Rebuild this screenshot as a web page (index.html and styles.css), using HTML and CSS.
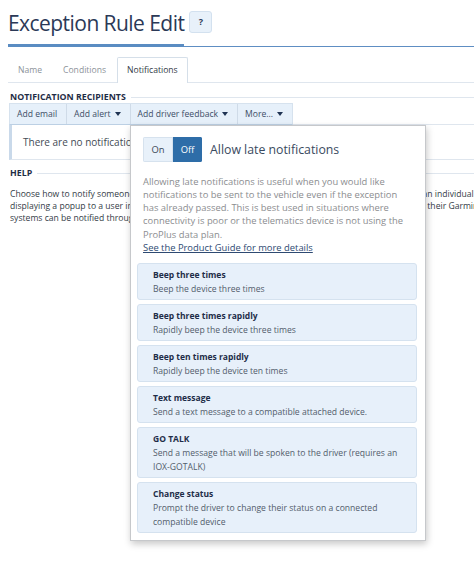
FILE: index.html
```html
<!DOCTYPE html>
<html lang="en">
<head>
<meta charset="utf-8">
<title>Exception Rule Edit</title>
<link rel="stylesheet" href="styles.css">
</head>
<body>
<div class="page">
  <header class="header">
    <h1 class="title">Exception Rule Edit</h1>
    <button class="help-btn" type="button">?</button>
  </header>

  <nav class="tabs">
    <span class="tab">Name</span>
    <span class="tab">Conditions</span>
    <span class="tab active">Notifications</span>
  </nav>

  <section class="section">
    <h2 class="section-title">NOTIFICATION RECIPIENTS</h2>
    <div class="toolbar-row">
      <div class="toolbar">
        <button class="tb-btn" type="button">Add email</button>
        <button class="tb-btn" type="button">Add alert <span class="caret"></span></button>
        <button class="tb-btn" type="button">Add driver feedback <span class="caret"></span></button>
        <button class="tb-btn" type="button">More... <span class="caret"></span></button>
      </div>
    </div>
    <div class="empty">There are no notification recipients for this rule yet.</div>
  </section>

  <section class="section help">
    <h2 class="section-title">HELP</h2>
    <p class="help-text">
      <span class="line">Choose how to notify someone when the exception rule is triggered. Notifications can be sent to either an individual by email, by</span>
      <span class="line">displaying a popup to a user in MyGeotab, or by sending driver feedback to the GO device. Drivers using their Garmin navigation</span>
      <span class="line">systems can be notified through the in-vehicle devices.</span>
    </p>
  </section>

  <div class="popup">
    <div class="late-row">
      <div class="toggle">
        <span class="seg">On</span>
        <span class="seg seg-on">Off</span>
      </div>
      <span class="late-label">Allow late notifications</span>
    </div>
    <p class="late-desc">Allowing late notifications is useful when you would like notifications to be sent to the vehicle even if the exception has already passed. This is best used in situations where connectivity is poor or the telematics device is not using the ProPlus data plan.
      <a class="guide-link" href="#">See the Product Guide for more details</a>
    </p>
    <ul class="options">
      <li class="option"><span class="opt-title">Beep three times</span><span class="opt-desc">Beep the device three times</span></li>
      <li class="option"><span class="opt-title">Beep three times rapidly</span><span class="opt-desc">Rapidly beep the device three times</span></li>
      <li class="option"><span class="opt-title">Beep ten times rapidly</span><span class="opt-desc">Rapidly beep the device ten times</span></li>
      <li class="option"><span class="opt-title">Text message</span><span class="opt-desc">Send a text message to a compatible attached device.</span></li>
      <li class="option"><span class="opt-title">GO TALK</span><span class="opt-desc">Send a message that will be spoken to the driver (requires an IOX-GOTALK)</span></li>
      <li class="option"><span class="opt-title">Change status</span><span class="opt-desc">Prompt the driver to change their status on a connected compatible device</span></li>
    </ul>
  </div>
</div>
</body>
</html>
```
FILE: styles.css
```css
* { box-sizing: border-box; }

html, body {
  margin: 0;
  background: #ffffff;
}

body {
  font-family: "Open Sans", "Noto Sans", sans-serif;
  color: #333b46;
  overflow: hidden;
}

.page {
  position: relative;
  width: 474px;
  height: 587px;
  overflow: hidden;
  padding-left: 8px;
}

/* Header */
.header {
  display: flex;
  align-items: flex-end;
  height: 47px;
  border-bottom: 1px solid #5e8ec3;
}

.title {
  margin: 0 0 -1px 0;
  padding-bottom: 7px;
  font-size: 21px;
  line-height: 28px;
  font-weight: 400;
  letter-spacing: -0.55px;
  color: #2b3957;
  border-bottom: 3px solid #5a8cc2;
}

.help-btn {
  margin: 0 0 13px 5px;
  width: 23px;
  height: 22px;
  padding: 0;
  border: 1px solid #d3e1ef;
  border-radius: 3px;
  background: #e8f1fa;
  color: #2b3957;
  font-family: inherit;
  font-size: 9px;
  font-weight: 700;
  line-height: 20px;
}

/* Tabs */
.tabs {
  display: flex;
  margin-top: 10px;
  height: 26px;
  border-bottom: 1px solid #dfe6ee;
}

.tab {
  padding: 0 9px;
  margin-right: 1px;
  font-size: 8.6px;
  line-height: 25px;
  color: #8c9299;
  border: 1px solid transparent;
  border-bottom: none;
}

.tab.active {
  height: 26px;
  color: #333b46;
  background: #ffffff;
  border-color: #d5dfe9;
  border-radius: 2px 2px 0 0;
}

/* Sections */
.section {
  margin-left: 1px;
}

.section-title {
  display: flex;
  align-items: center;
  gap: 5px;
  margin: 8px 0 0 1px;
  font-size: 8.8px;
  line-height: 12px;
  font-weight: 700;
  color: #1f2d46;
}

.section-title::after {
  content: "";
  flex: 1;
  height: 1px;
  background: #dfe6ee;
}

.toolbar-row {
  display: flex;
  border-bottom: 1px solid #dfe6ee;
}

.toolbar {
  display: flex;
  height: 22px;
  background: #e6f0fa;
  border: 1px solid #d6e2ee;
  border-bottom: 1px solid #bcd0e4;
  margin-bottom: -1px;
}

.tb-btn {
  display: flex;
  align-items: center;
  gap: 4px;
  padding: 0 9px 0 7px;
  border: none;
  border-right: 1px solid #cfdbe8;
  background: transparent;
  font-family: inherit;
  font-size: 8.6px;
  color: #3d4e66;
}

.tb-btn:last-child {
  border-right: none;
}

.caret {
  width: 0;
  height: 0;
  border-left: 3.5px solid transparent;
  border-right: 3.5px solid transparent;
  border-top: 4px solid #1f3353;
}

.empty {
  height: 35px;
  padding-left: 11px;
  border-left: 3px solid #c9d9ea;
  border-bottom: 1px solid #dfe6ee;
  font-size: 10px;
  line-height: 34px;
  color: #444b55;
  white-space: nowrap;
}

.help .section-title {
  margin-top: 7px;
}

.help-text {
  margin: 9px 0 0 1px;
  font-size: 8.6px;
  line-height: 12px;
  color: #333b46;
}

.help-text .line {
  display: block;
  white-space: nowrap;
}

/* Popup */
.popup {
  position: absolute;
  left: 130px;
  top: 125px;
  width: 296px;
  padding: 11px 8px 7px 6px;
  background: #ffffff;
  border: 1px solid #c6c8cb;
  box-shadow: 1px 3px 7px rgba(0, 0, 0, 0.22);
}

.late-row {
  display: flex;
  align-items: center;
  padding-left: 6px;
}

.toggle {
  display: flex;
  height: 25px;
  border-radius: 2px;
  overflow: hidden;
}

.seg {
  width: 30px;
  font-size: 9.4px;
  line-height: 23px;
  text-align: center;
  color: #3b4656;
  background: #e8f1fa;
  border: 1px solid #d6e2ee;
}

.seg-on {
  width: 29px;
  color: #ffffff;
  background: #2e6da8;
  border-color: #2e6da8;
}

.late-label {
  margin-left: 8px;
  font-size: 12.3px;
  color: #3a4a60;
}

.late-desc {
  margin: 12.5px 0 0 0;
  padding: 0 8px 0 6px;
  font-size: 9.4px;
  line-height: 13.3px;
  color: #8b8d90;
}

.guide-link {
  display: block;
  color: #2e4a72;
  text-decoration: underline;
}

.options {
  list-style: none;
  margin: 8.5px 0 0 0;
  padding: 0;
  display: flex;
  flex-direction: column;
  gap: 4px;
}

.option {
  display: flex;
  flex-direction: column;
  padding: 4px 10px 3px 15px;
  background: #e7f0fa;
  border: 1px solid #d5e2ef;
  border-radius: 3px;
  line-height: 14px;
}

.opt-title {
  font-size: 8.5px;
  font-weight: 700;
  color: #1e2d48;
}

.opt-desc {
  font-size: 8.6px;
  color: #525d6b;
}
```
